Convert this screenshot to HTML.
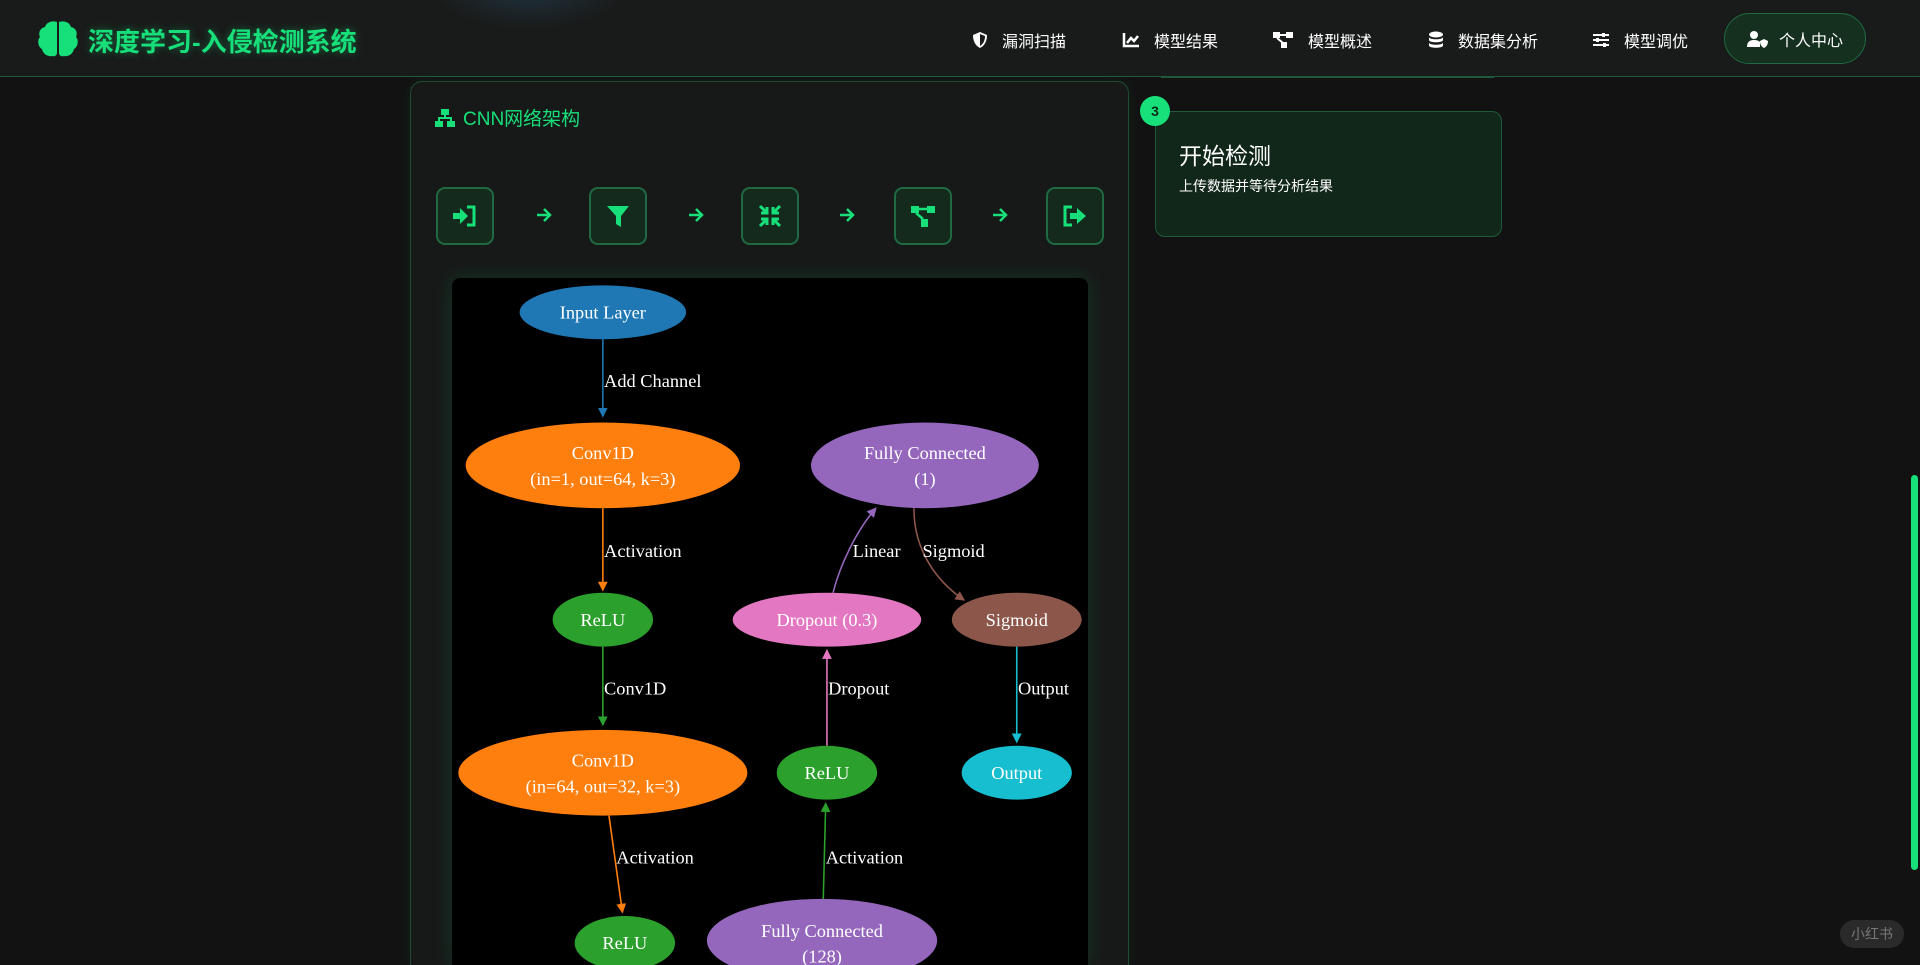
<!DOCTYPE html>
<html><head><meta charset="utf-8"><style>
*{margin:0;padding:0;box-sizing:border-box}
html,body{width:1920px;height:965px;overflow:hidden}
body{background:#121212;font-family:"Liberation Sans","Noto Sans CJK SC",sans-serif;position:relative}
.hdr{position:absolute;left:0;top:0;width:1920px;height:77px;background:#191b1a;border-bottom:1px solid #1f5a3c}
.glow{position:absolute;left:430px;top:-60px;width:200px;height:90px;border-radius:50%;background:radial-gradient(rgba(40,80,110,.45),rgba(0,0,0,0) 70%)}
.title{position:absolute;left:88px;top:22px;font-size:26px;font-weight:bold;color:#17e07a;text-shadow:0 0 8px rgba(23,224,122,.4)}
.nav{position:absolute;top:28px;font-size:16px;color:#fff;display:flex;align-items:center;gap:14px}
.btn{position:absolute;left:1724px;top:13px;width:142px;height:51px;border-radius:26px;background:#15301f;border:1px solid #1f6a42;color:#fff;font-size:16px;display:flex;align-items:center;justify-content:center;gap:10px}
.card{position:absolute;left:410px;top:81px;width:719px;height:884px;border:1px solid #1f4a33;border-bottom:none;border-radius:12px 12px 0 0;background:#171918;box-shadow:0 0 12px rgba(23,224,122,.08)}
.ct{position:absolute;left:435px;top:104px;color:#17e07a;font-size:19px;display:flex;gap:8px;align-items:center}
.box{position:absolute;top:187px;width:58px;height:58px;border:2px solid #1f6a42;border-radius:9px;background:#132a1d;display:flex;align-items:center;justify-content:center}
.arr{position:absolute;top:205px}
.graph{position:absolute;left:452px;top:278px;width:636px;height:687px;background:#000;border-radius:8px 8px 0 0;overflow:hidden;box-shadow:0 0 20px rgba(23,224,122,.15)}
.step{position:absolute;left:1155px;top:111px;width:347px;height:126px;border:1px solid #1f5a3c;border-radius:10px;background:#11271a}
.badge{position:absolute;left:1140px;top:96px;width:30px;height:30px;border-radius:50%;background:#17e07a;color:#0b2a18;font-weight:bold;font-size:14px;display:flex;align-items:center;justify-content:center}
</style></head><body>
<div class="hdr"><div class="glow"></div></div>
<svg style="position:absolute;left:37px;top:20px" width="42" height="38" viewBox="0 0 42 38"><path d="M20 2C14 0 9 3 8 7 3 8 1 13 3 17 0 20 1 27 5 29 6 34 11 37 15 36 18 37 20 35 20 33Z M22 2C28 0 33 3 34 7 39 8 41 13 39 17 42 20 41 27 37 29 36 34 31 37 27 36 24 37 22 35 22 33Z" fill="#17e07a"/></svg>
<div class="title">深度学习-入侵检测系统</div>
<div class="nav" style="left:972px"><svg width="16" height="18" viewBox="0 0 16 18"><path d="M8 1 15 4C15 11 12 15 8 17 4 15 1 11 1 4Z" fill="#fff"/><path d="M8 3V15C11 13 13 10 13 5Z" fill="#191b1a"/></svg><span>漏洞扫描</span></div>
<div class="nav" style="left:1122px"><svg width="18" height="16" viewBox="0 0 18 16"><path d="M2 1V14H17" stroke="#fff" stroke-width="2.5" fill="none"/><path d="M5 11 9 6 12 9 16 4" stroke="#fff" stroke-width="2.5" fill="none"/></svg><span>模型结果</span></div>
<div class="nav" style="left:1272px"><svg width="22" height="18" viewBox="0 0 22 18"><rect x="1" y="1" width="7" height="6" fill="#fff"/><rect x="14" y="1" width="7" height="6" fill="#fff"/><rect x="9" y="11" width="6" height="6" fill="#fff"/><path d="M8 4H14M5 7 11 12" stroke="#fff" stroke-width="2"/></svg><span>模型概述</span></div>
<div class="nav" style="left:1428px"><svg width="16" height="18" viewBox="0 0 16 18"><ellipse cx="8" cy="3.5" rx="7" ry="3" fill="#fff"/><path d="M1 6C1 9 15 9 15 6V9C15 12 1 12 1 9ZM1 11.5C1 14.5 15 14.5 15 11.5V14.5C15 17.5 1 17.5 1 14.5Z" fill="#fff"/></svg><span>数据集分析</span></div>
<div class="nav" style="left:1592px"><svg width="18" height="16" viewBox="0 0 18 16"><path d="M1 3H17M1 8H17M1 13H17" stroke="#fff" stroke-width="2"/><rect x="10" y="1" width="3" height="4" fill="#fff"/><rect x="4" y="6" width="3" height="4" fill="#fff"/><rect x="11" y="11" width="3" height="4" fill="#fff"/></svg><span>模型调优</span></div>
<div class="btn"><svg width="22" height="18" viewBox="0 0 22 18"><circle cx="7" cy="5" r="4" fill="#fff"/><path d="M0 17C0 11 4 10 7 10 10 10 12 11 13 12V17Z" fill="#fff"/><path d="M17 9 21 11C21 15 19 17 17 18 15 17 13 15 13 11Z" fill="#fff"/></svg><span>个人中心</span></div>
<div style="position:absolute;left:1161px;top:76px;width:333px;height:2px;background:#1f5a3c"></div>
<div class="card"></div>
<div class="ct"><svg width="20" height="18" viewBox="0 0 20 18"><rect x="6" y="0" width="8" height="6" fill="#17e07a"/><rect x="0" y="12" width="8" height="6" fill="#17e07a"/><rect x="12" y="12" width="8" height="6" fill="#17e07a"/><path d="M10 6V9M4 12V9H16V12" stroke="#17e07a" stroke-width="2" fill="none"/></svg><span>CNN网络架构</span></div>
<div class="box" style="left:436px"><svg width="26" height="22" viewBox="0 0 26 22"><path d="M1 8H8V3L16 11 8 19V14H1Z" fill="#17e07a"/><path d="M15 2H22V20H15" stroke="#17e07a" stroke-width="3" fill="none"/></svg></div>
<svg class="arr" style="left:536px" width="16" height="20" viewBox="0 0 16 20"><path d="M1 10H14M8 4 14 10 8 16" stroke="#17e07a" stroke-width="2.5" fill="none"/></svg>
<div class="box" style="left:589px"><svg width="24" height="24" viewBox="0 0 24 24"><path d="M1 2H23L15 12V23L10 20V12Z" fill="#17e07a"/></svg></div>
<svg class="arr" style="left:688px" width="16" height="20" viewBox="0 0 16 20"><path d="M1 10H14M8 4 14 10 8 16" stroke="#17e07a" stroke-width="2.5" fill="none"/></svg>
<div class="box" style="left:741px"><svg width="24" height="24" viewBox="0 0 24 24"><path d="M2 2 9 9M9 3V9H3M22 2 15 9M15 3V9H21M2 22 9 15M9 21V15H3M22 22 15 15M15 21V15H21" stroke="#17e07a" stroke-width="3" fill="none"/></svg></div>
<svg class="arr" style="left:839px" width="16" height="20" viewBox="0 0 16 20"><path d="M1 10H14M8 4 14 10 8 16" stroke="#17e07a" stroke-width="2.5" fill="none"/></svg>
<div class="box" style="left:894px"><svg width="26" height="24" viewBox="0 0 26 24"><rect x="1" y="2" width="8" height="7" fill="#17e07a"/><rect x="17" y="2" width="8" height="7" fill="#17e07a"/><rect x="11" y="15" width="7" height="8" fill="#17e07a"/><path d="M9 5H17M6 9 13 15" stroke="#17e07a" stroke-width="2.5"/></svg></div>
<svg class="arr" style="left:992px" width="16" height="20" viewBox="0 0 16 20"><path d="M1 10H14M8 4 14 10 8 16" stroke="#17e07a" stroke-width="2.5" fill="none"/></svg>
<div class="box" style="left:1046px"><svg width="26" height="22" viewBox="0 0 26 22"><path d="M10 2H3V20H10" stroke="#17e07a" stroke-width="3" fill="none"/><path d="M8 8H15V3L24 11 15 19V14H8Z" fill="#17e07a"/></svg></div>
<div class="graph"><svg width="636" height="687" viewBox="369 227 519 561" font-family="Liberation Serif,serif" font-size="15" text-anchor="middle">
<defs>
<marker id="m" markerWidth="8" markerHeight="8" refX="7" refY="4" orient="auto" markerUnits="userSpaceOnUse" viewBox="0 0 8 8"><path d="M0 0 8 4 0 8Z" fill="context-stroke"/></marker>
</defs>
<g stroke-width="1.3" fill="none">
<path d="M492 277V340" stroke="#1f77b4" marker-end="url(#m)"/>
<path d="M492 415V482" stroke="#ff7f0e" marker-end="url(#m)"/>
<path d="M492 528V592" stroke="#2ca02c" marker-end="url(#m)"/>
<path d="M497 666 508 745" stroke="#ff7f0e" marker-end="url(#m)"/>
<path d="M672 734 674 656" stroke="#2ca02c" marker-end="url(#m)"/>
<path d="M675 609V531" stroke="#e377c2" marker-end="url(#m)"/>
<path d="M680 484C686 460 700 432 715 415" stroke="#9467bd" marker-end="url(#m)"/>
<path d="M746 415C746 450 765 475 787 490" stroke="#8c564b" marker-end="url(#m)"/>
<path d="M830 528V606" stroke="#17becf" marker-end="url(#m)"/>
</g>
<g fill="#fff" text-anchor="start">
<text x="493" y="316">Add Channel</text>
<text x="493" y="455">Activation</text>
<text x="493" y="567">Conv1D</text>
<text x="503" y="705">Activation</text>
<text x="674" y="705">Activation</text>
<text x="676" y="567">Dropout</text>
<text x="696" y="455">Linear</text>
<text x="753" y="455">Sigmoid</text>
<text x="831" y="567">Output</text>
</g>
<ellipse cx="492" cy="255" rx="68" ry="22" fill="#1f77b4"/>
<ellipse cx="492" cy="380" rx="112" ry="35" fill="#ff7f0e"/>
<ellipse cx="492" cy="506" rx="41" ry="22" fill="#2ca02c"/>
<ellipse cx="492" cy="631" rx="118" ry="35" fill="#ff7f0e"/>
<ellipse cx="510" cy="770" rx="41" ry="22" fill="#2ca02c"/>
<ellipse cx="671" cy="768" rx="94" ry="34" fill="#9467bd"/>
<ellipse cx="675" cy="631" rx="41" ry="22" fill="#2ca02c"/>
<ellipse cx="675" cy="506" rx="77" ry="22" fill="#e377c2"/>
<ellipse cx="755" cy="380" rx="93" ry="35" fill="#9467bd"/>
<ellipse cx="830" cy="506" rx="53" ry="22" fill="#8c564b"/>
<ellipse cx="830" cy="631" rx="45" ry="22" fill="#17becf"/>
<g fill="#fff">
<text x="492" y="260">Input Layer</text>
<text x="492" y="375">Conv1D</text><text x="492" y="396">(in=1, out=64, k=3)</text>
<text x="492" y="511">ReLU</text>
<text x="492" y="626">Conv1D</text><text x="492" y="647">(in=64, out=32, k=3)</text>
<text x="510" y="775">ReLU</text>
<text x="671" y="765">Fully Connected</text><text x="671" y="786">(128)</text>
<text x="675" y="636">ReLU</text>
<text x="675" y="511">Dropout (0.3)</text>
<text x="755" y="375">Fully Connected</text><text x="755" y="396">(1)</text>
<text x="830" y="511">Sigmoid</text>
<text x="830" y="636">Output</text>
</g></svg></div>
<div class="step"><div style="position:absolute;left:23px;top:25px;color:#fff;font-size:23px">开始检测</div><div style="position:absolute;left:23px;top:64px;color:#fff;font-size:14px">上传数据并等待分析结果</div></div>
<div class="badge">3</div>
<div style="position:absolute;left:1911px;top:475px;width:7px;height:395px;border-radius:4px;background:#17e07a"></div>
<div style="position:absolute;left:1840px;top:920px;width:64px;height:28px;border-radius:14px;background:#2a2a2a;color:#777;font-size:14px;display:flex;align-items:center;justify-content:center">小红书</div>
</body></html>
